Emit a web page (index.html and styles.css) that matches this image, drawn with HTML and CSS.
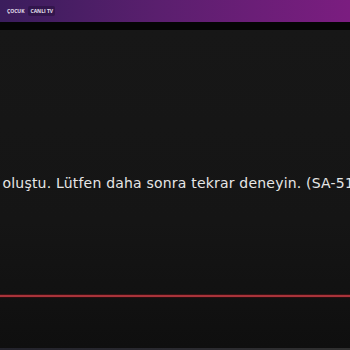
FILE: index.html
```html
<!DOCTYPE html>
<html lang="tr">

<head>
    <meta charset="UTF-8">
    <meta name="viewport" content="width=device-width, initial-scale=1">
    <title>Canlı TV</title>
    <link rel="stylesheet" href="styles.css">
</head>

<body>
    <header class="topbar">
        <nav class="menu">
            <a href="#">ÇOCUK</a>
            <a href="#" class="current">CANLI TV</a>
        </nav>
    </header>
    <div class="gap"></div>

    <main class="player">
        <div class="message">
            <p>Bir hata oluştu. Lütfen daha sonra tekrar deneyin. (SA-51)</p>
        </div>
        <div class="progress"></div>
        <div class="controls"></div>
    </main>
    <div class="bottom"></div>
</body>

</html>
```
FILE: styles.css
```css
html,
body {
    margin: 0;
    height: 100%;
    overflow: hidden;
    background-color: #0c0c0c;
    font-family: "Open Sans", "Liberation Sans", sans-serif;
}

body {
    display: flex;
    flex-direction: column;
}

.topbar {
    height: 22px;
    background: linear-gradient(90deg, #3a1d5c 0%, #5a1f6e 45%, #7b1d80 100%);
    display: flex;
    align-items: center;
    padding-left: 5px;
}

.menu {
    display: flex;
    gap: 2px;
}

.menu a {
    color: #e6e0ee;
    text-decoration: none;
    font-size: 5px;
    font-weight: 700;
    padding: 2px 2px;
    border-radius: 2px;
}

.menu a.current {
    background-color: rgba(20, 10, 40, 0.35);
}

.gap {
    height: 8px;
    background-color: #050505;
}

.player {
    flex: 1;
    display: flex;
    flex-direction: column;
    background: linear-gradient(180deg, #171717 0%, #151515 60%, #0f0f0f 100%);
}

.message {
    height: 264px;
    display: flex;
    align-items: center;
    overflow: hidden;
    white-space: nowrap;
}

/* the player's message is wider than the frame and gets clipped */
.message p {
    margin: 0;
    margin-left: -59px;
    padding-top: 42px;
    color: #e6e6e6;
    font-family: "DejaVu Sans", "Open Sans", sans-serif;
    font-size: 14px;
    letter-spacing: 0.2px;
}

.progress {
    height: 2px;
    background-color: #a8333a;
    border-top: 1px solid #3a1214;
    border-bottom: 1px solid #2a0e10;
}

.controls {
    flex: 1;
}

.bottom {
    height: 2px;
    background: linear-gradient(90deg, #23232c 0%, #2a2a30 50%, #303030 100%);
}
```
